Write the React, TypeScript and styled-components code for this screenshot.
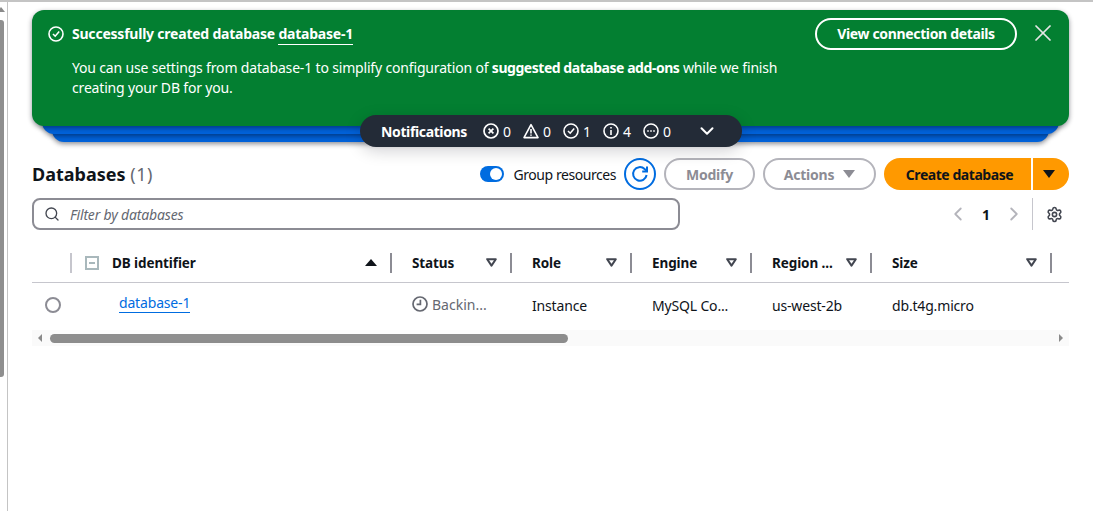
import React from "react";
import styled, { createGlobalStyle } from "styled-components";
import { ChevronDown, ChevronLeft, ChevronRight, Search, Settings, X } from "lucide-react";

const GlobalStyle = createGlobalStyle`
  html, body {
    margin: 0;
    padding: 0;
    height: 100%;
    overflow: hidden;
    background: #fff;
  }
  body {
    font-family: "Noto Sans", "Open Sans", sans-serif;
    font-size: 14px;
    letter-spacing: -0.17px;
    color: #0f141a;
  }
`;

const Frame = styled.div`
  display: flex;
  width: 1093px;
  height: 511px;
  box-sizing: border-box;
  border-top: 2px solid #c4c4c4;
`;

const Rail = styled.div`
  width: 7px;
  flex: none;
  border-right: 1px solid #c4c4c4;
  display: flex;
  flex-direction: column;
`;

const RailArrow = styled.div`
  width: 0;
  height: 0;
  margin: 5px 0 0 0;
  border-left: 4px solid transparent;
  border-right: 4px solid transparent;
  border-bottom: 5px solid #8a8a8a;
  transform: translateX(-3px);
`;

const RailThumb = styled.div`
  width: 4px;
  height: 357px;
  margin-top: 8px;
  background: #8f8f8f;
  border-radius: 0 3px 3px 0;
`;

const Main = styled.main`
  flex: 1;
  padding: 8px 24px 0;
  min-width: 0;
`;

const FlashStack = styled.div`
  position: relative;
  height: 139px;
`;

const StackLayer = styled.div<{ $inset: number; $bottom: number }>`
  position: absolute;
  left: ${(p) => p.$inset}px;
  right: ${(p) => p.$inset}px;
  top: 20px;
  height: ${(p) => p.$bottom - 20}px;
  background: #0062da;
  border-radius: 12px;
  box-shadow: 0 2px 5px rgba(0, 7, 22, 0.45);
`;

const Flash = styled.section`
  position: absolute;
  inset: 0 0 auto 0;
  height: 116px;
  box-sizing: border-box;
  background: #037f31;
  border-radius: 12px;
  color: #fff;
  padding: 13px 16px 12px;
  display: flex;
  box-shadow: 0 2px 5px rgba(0, 7, 22, 0.45);
`;

const FlashIcon = styled.div`
  width: 16px;
  height: 16px;
  flex: none;
  margin: 3px 8px 0 0;
`;

const FlashBody = styled.div`
  flex: 1;
  min-width: 0;
`;

const FlashTitle = styled.div`
  font-size: 14px;
  line-height: 22px;
  font-weight: 700;
  letter-spacing: -0.22px;
`;

const FlashLink = styled.a`
  border-bottom: 1px solid #fff;
  padding-bottom: 1px;
`;

const FlashText = styled.p`
  margin: 13px 0 0;
  width: 720px;
  line-height: 20px;
  font-size: 14px;
`;

const FlashStrong = styled.strong`
  letter-spacing: -0.46px;
`;

const FlashOutline = styled.button`
  flex: none;
  align-self: flex-start;
  height: 32px;
  margin: -5px 0 0;
  width: 202px;
  background: transparent;
  border: 2px solid #fff;
  border-radius: 16px;
  color: #fff;
  font: 700 14px/18px "Noto Sans", sans-serif;
  letter-spacing: -0.35px;
  padding: 0;
`;

const FlashClose = styled.div`
  flex: none;
  margin: -4px -4px 0 12px;
  color: #e6e6e6;
  display: flex;
`;

const NotificationBar = styled.div`
  position: absolute;
  left: 328px;
  top: 105px;
  width: 382px;
  height: 32px;
  box-sizing: border-box;
  padding-left: 21px;
  background: #232b37;
  color: #fff;
  border-radius: 16px;
  display: flex;
  align-items: center;
  box-shadow: 0 4px 16px rgba(0, 7, 22, 0.18);
`;

const NotificationLabel = styled.span`
  font-weight: 700;
  font-size: 14px;
  letter-spacing: -0.37px;
  width: 102px;
`;

const Counter = styled.span`
  display: flex;
  align-items: center;
  gap: 4px;
  width: 40px;
  font-size: 14px;
`;

const NotificationToggle = styled.div`
  margin-left: 13px;
  display: flex;
`;

const Header = styled.div`
  display: flex;
  align-items: center;
  height: 32px;
  margin-top: 9px;
`;

const Title = styled.h1`
  margin: 0;
  font-size: 18px;
  font-weight: 700;
  letter-spacing: 0;
  flex: 1;
`;

const TitleCount = styled.span`
  font-weight: 400;
  letter-spacing: 0.6px;
  color: #656871;
`;

const ToggleWrap = styled.div`
  display: flex;
  align-items: center;
  gap: 9px;
  margin-right: 8px;
  font-size: 14px;
  letter-spacing: -0.44px;
`;

const ToggleTrack = styled.div`
  width: 24px;
  height: 16px;
  border-radius: 8px;
  background: #006ce0;
  position: relative;
`;

const ToggleKnob = styled.div`
  position: absolute;
  right: 2px;
  top: 2px;
  width: 12px;
  height: 12px;
  border-radius: 50%;
  background: #fff;
`;

const RefreshButton = styled.div`
  width: 32px;
  height: 32px;
  box-sizing: border-box;
  border: 2px solid #006ce0;
  border-radius: 50%;
  color: #006ce0;
  display: flex;
  align-items: center;
  justify-content: center;
  margin-right: 8px;
`;

const DisabledButton = styled.button<{ $width: number }>`
  width: ${(p) => p.$width}px;
  height: 32px;
  box-sizing: border-box;
  border: 2px solid #b4b4bb;
  border-radius: 16px;
  background: #fff;
  color: #8c8c94;
  font: 700 14px "Noto Sans", sans-serif;
  letter-spacing: -0.2px;
  margin-right: 8px;
  padding: 0;
  display: flex;
  align-items: center;
  justify-content: center;
  gap: 9px;
`;

const Caret = styled.span<{ $color: string; $down?: boolean; $size?: number }>`
  width: 0;
  height: 0;
  border-left: ${(p) => p.$size ?? 6}px solid transparent;
  border-right: ${(p) => p.$size ?? 6}px solid transparent;
  ${(p) =>
    p.$down
      ? `border-top: ${(p.$size ?? 6) + 2}px solid ${p.$color};`
      : `border-bottom: ${(p.$size ?? 6) + 1}px solid ${p.$color};`}
`;

const PrimaryGroup = styled.div`
  display: flex;
  height: 32px;
  gap: 2px;
`;

const PrimaryButton = styled.button`
  width: 147px;
  border: 0;
  background: #ff9900;
  color: #0f141a;
  border-radius: 16px 0 0 16px;
  font: 700 14px "Noto Sans", sans-serif;
  letter-spacing: -0.45px;
  padding: 0 0 0 4px;
`;

const PrimaryCaret = styled.div`
  width: 36px;
  background: #ff9900;
  border-radius: 0 16px 16px 0;
  display: flex;
  align-items: center;
  justify-content: center;
  padding-right: 4px;
  box-sizing: border-box;
`;

const FilterRow = styled.div`
  display: flex;
  align-items: center;
  height: 32px;
  margin-top: 8px;
`;

const FilterBox = styled.div`
  width: 648px;
  height: 32px;
  box-sizing: border-box;
  border: 2px solid #8c8c94;
  border-radius: 8px;
  display: flex;
  align-items: center;
  padding-left: 10px;
  gap: 10px;
  color: #424650;
`;

const FilterHint = styled.span`
  font-style: italic;
  font-size: 14px;
  color: #656871;
`;

const Pager = styled.div`
  margin-left: auto;
  padding-right: 6px;
  display: flex;
  align-items: center;
  color: #b4b4bb;
`;

const PageNumber = styled.span`
  color: #0f141a;
  font-weight: 700;
  font-size: 14px;
  width: 34px;
  text-align: center;
`;

const PagerRule = styled.div`
  width: 1px;
  height: 32px;
  background: #c6c6cd;
  margin: 0 13px 0 7px;
`;

const Table = styled.div`
  margin-top: 13px;
`;

const Columns = "40px 320px 120px 120px 120px 120px 180px 17px";

const HeadRow = styled.div`
  display: grid;
  grid-template-columns: ${Columns};
  height: 39px;
  border-bottom: 1px solid #c6c6cd;
  align-items: center;
`;

const HeadCell = styled.div`
  height: 20px;
  display: flex;
  align-items: center;
  box-sizing: border-box;
  padding: 0 13px 0 20px;
  font-weight: 700;
  font-size: 13.5px;
  letter-spacing: -0.1px;
  color: #0f141a;
  border-right: 2px solid #8c8c94;
`;

const HeadLabel = styled.span`
  flex: 1;
  white-space: nowrap;
`;

const SelectHead = styled.div`
  height: 20px;
  border-right: 2px solid #c6c6cd;
  box-sizing: content-box;
`;

const Indeterminate = styled.div`
  width: 14px;
  height: 14px;
  box-sizing: border-box;
  border: 2px solid #a9b8bc;
  margin: 0 13px 0 -7px;
  position: relative;
  flex: none;
  &::after {
    content: "";
    position: absolute;
    left: 2px;
    right: 2px;
    top: 4px;
    height: 2px;
    background: #a9b8bc;
  }
`;

const BodyRow = styled.div`
  display: grid;
  grid-template-columns: ${Columns};
  height: 44px;
  align-items: center;
`;

const Radio = styled.div`
  width: 16px;
  height: 16px;
  box-sizing: border-box;
  border: 2px solid #8c8c94;
  border-radius: 50%;
  margin: 0 0 0 13px;
`;

const Cell = styled.div`
  padding: 0 0 0 20px;
  font-size: 14px;
  white-space: nowrap;
`;

const NameLink = styled.a`
  display: inline-block;
  line-height: 18px;
  margin-left: 27px;
  color: #006ce0;
  border-bottom: 1px solid #006ce0;
  position: relative;
  top: -2px;
`;

const StatusCell = styled.div`
  padding-left: 20px;
  display: flex;
  align-items: center;
  gap: 4px;
  color: #656871;
  font-size: 14px;
  letter-spacing: 0;
  position: relative;
  top: -1px;
`;

const ScrollTrack = styled.div`
  height: 16px;
  margin-top: 3px;
  background: #fafafa;
  display: flex;
  align-items: center;
  padding: 0 6px;
`;

const ScrollThumb = styled.div`
  width: 518px;
  height: 9px;
  margin-left: 8px;
  background: #8c8c8c;
  border-radius: 5px;
`;

const ScrollArrow = styled.span<{ $right?: boolean }>`
  width: 0;
  height: 0;
  border-top: 4px solid transparent;
  border-bottom: 4px solid transparent;
  ${(p) =>
    p.$right
      ? "border-left: 4px solid #8a8a8a; margin-left: auto;"
      : "border-right: 4px solid #8a8a8a;"}
`;

function CheckCircle() {
  return (
    <svg width="16" height="16" viewBox="0 0 16 16" fill="none" stroke="currentColor" strokeWidth="1.6">
      <circle cx="8" cy="8" r="7" />
      <path d="M5 8l2.2 2.2L11.2 5.6" />
    </svg>
  );
}

function ErrorIcon() {
  return (
    <svg width="16" height="16" viewBox="0 0 16 16" fill="none" stroke="currentColor" strokeWidth="1.7">
      <circle cx="8" cy="8" r="7" />
      <path d="M5.6 5.6l4.8 4.8M10.4 5.6l-4.8 4.8" />
    </svg>
  );
}

function WarningIcon() {
  return (
    <svg width="16" height="16" viewBox="0 0 16 16" fill="none" stroke="currentColor" strokeWidth="1.6">
      <path d="M8 1.6L15 14.6H1z" strokeLinejoin="round" />
      <path d="M8 6v4.6M8 11.4v1.4" />
    </svg>
  );
}

function InfoIcon() {
  return (
    <svg width="16" height="16" viewBox="0 0 16 16" fill="none" stroke="currentColor" strokeWidth="1.6">
      <circle cx="8" cy="8" r="7" />
      <path d="M8 7v5M8 4v1.6" />
    </svg>
  );
}

function PendingIcon() {
  return (
    <svg width="16" height="16" viewBox="0 0 16 16" fill="none" stroke="currentColor" strokeWidth="1.6">
      <circle cx="8" cy="8" r="7" />
      <path d="M4.2 8h1.6M7.2 8h1.6M10.2 8h1.6" />
    </svg>
  );
}

function RefreshIcon() {
  return (
    <svg width="18" height="18" viewBox="0 0 18 18" fill="none" stroke="currentColor" strokeWidth="2">
      <path d="M15.6 10a6.8 6.8 0 1 1-2-6l2.2 2" />
      <path d="M16 1.6V6.4h-4.8" />
    </svg>
  );
}

function ClockIcon() {
  return (
    <svg width="16" height="16" viewBox="0 0 16 16" fill="none" stroke="#656871" strokeWidth="1.7">
      <circle cx="8" cy="8" r="7" />
      <path d="M8.4 3.8v4.6H4.6" />
    </svg>
  );
}

function FilterCaret() {
  return (
    <svg width="11" height="9" viewBox="0 0 11 9" fill="none" stroke="#424650" strokeWidth="2">
      <path d="M1.2 1.2h8.6L5.5 7.6z" strokeLinejoin="round" />
    </svg>
  );
}

const counters = [
  { icon: <ErrorIcon />, value: 0 },
  { icon: <WarningIcon />, value: 0 },
  { icon: <CheckCircle />, value: 1 },
  { icon: <InfoIcon />, value: 4 },
  { icon: <PendingIcon />, value: 0 },
];

const filterColumns = ["Status", "Role", "Engine", "Region ...", "Size"];

export default function App() {
  return (
    <>
      <GlobalStyle />
      <Frame>
        <Rail>
          <RailArrow />
          <RailThumb />
        </Rail>
        <Main>
          <FlashStack>
            <StackLayer $inset={20} $bottom={132} />
            <StackLayer $inset={10} $bottom={124} />
            <Flash>
              <FlashIcon>
                <CheckCircle />
              </FlashIcon>
              <FlashBody>
                <FlashTitle>
                  Successfully created database <FlashLink>database-1</FlashLink>
                </FlashTitle>
                <FlashText>
                  You can use settings from database-1 to simplify configuration of{" "}
                  <FlashStrong>suggested database add-ons</FlashStrong> while we finish creating your DB for you.
                </FlashText>
              </FlashBody>
              <FlashOutline>View connection details</FlashOutline>
              <FlashClose>
                <X size={28} strokeWidth={1.5} />
              </FlashClose>
            </Flash>
            <NotificationBar>
              <NotificationLabel>Notifications</NotificationLabel>
              {counters.map((c, i) => (
                <Counter key={i}>
                  {c.icon}
                  {c.value}
                </Counter>
              ))}
              <NotificationToggle>
                <ChevronDown size={22} strokeWidth={2.2} />
              </NotificationToggle>
            </NotificationBar>
          </FlashStack>

          <Header>
            <Title>
              Databases <TitleCount>(1)</TitleCount>
            </Title>
            <ToggleWrap>
              <ToggleTrack>
                <ToggleKnob />
              </ToggleTrack>
              Group resources
            </ToggleWrap>
            <RefreshButton>
              <RefreshIcon />
            </RefreshButton>
            <DisabledButton $width={91}>Modify</DisabledButton>
            <DisabledButton $width={113}>
              Actions
              <Caret $color="#8c8c94" $down />
            </DisabledButton>
            <PrimaryGroup>
              <PrimaryButton>Create database</PrimaryButton>
              <PrimaryCaret>
                <Caret $color="#0f141a" $down />
              </PrimaryCaret>
            </PrimaryGroup>
          </Header>

          <FilterRow>
            <FilterBox>
              <Search size={16} strokeWidth={2} />
              <FilterHint>Filter by databases</FilterHint>
            </FilterBox>
            <Pager>
              <ChevronLeft size={22} strokeWidth={2} />
              <PageNumber>1</PageNumber>
              <ChevronRight size={22} strokeWidth={2} />
              <PagerRule />
              <Settings size={17} strokeWidth={2.2} color="#424650" />
            </Pager>
          </FilterRow>

          <Table>
            <HeadRow>
              <SelectHead />
              <HeadCell>
                <Indeterminate />
                <HeadLabel>DB identifier</HeadLabel>
                <Caret $color="#0f141a" $size={6} />
              </HeadCell>
              {filterColumns.map((name) => (
                <HeadCell key={name}>
                  <HeadLabel>{name}</HeadLabel>
                  <FilterCaret />
                </HeadCell>
              ))}
            </HeadRow>
            <BodyRow>
              <Radio />
              <Cell>
                <NameLink>database-1</NameLink>
              </Cell>
              <StatusCell>
                <ClockIcon />
                Backin...
              </StatusCell>
              <Cell>Instance</Cell>
              <Cell>MySQL Co...</Cell>
              <Cell>us-west-2b</Cell>
              <Cell>db.t4g.micro</Cell>
            </BodyRow>
            <ScrollTrack>
              <ScrollArrow />
              <ScrollThumb />
              <ScrollArrow $right />
            </ScrollTrack>
          </Table>
        </Main>
      </Frame>
    </>
  );
}
